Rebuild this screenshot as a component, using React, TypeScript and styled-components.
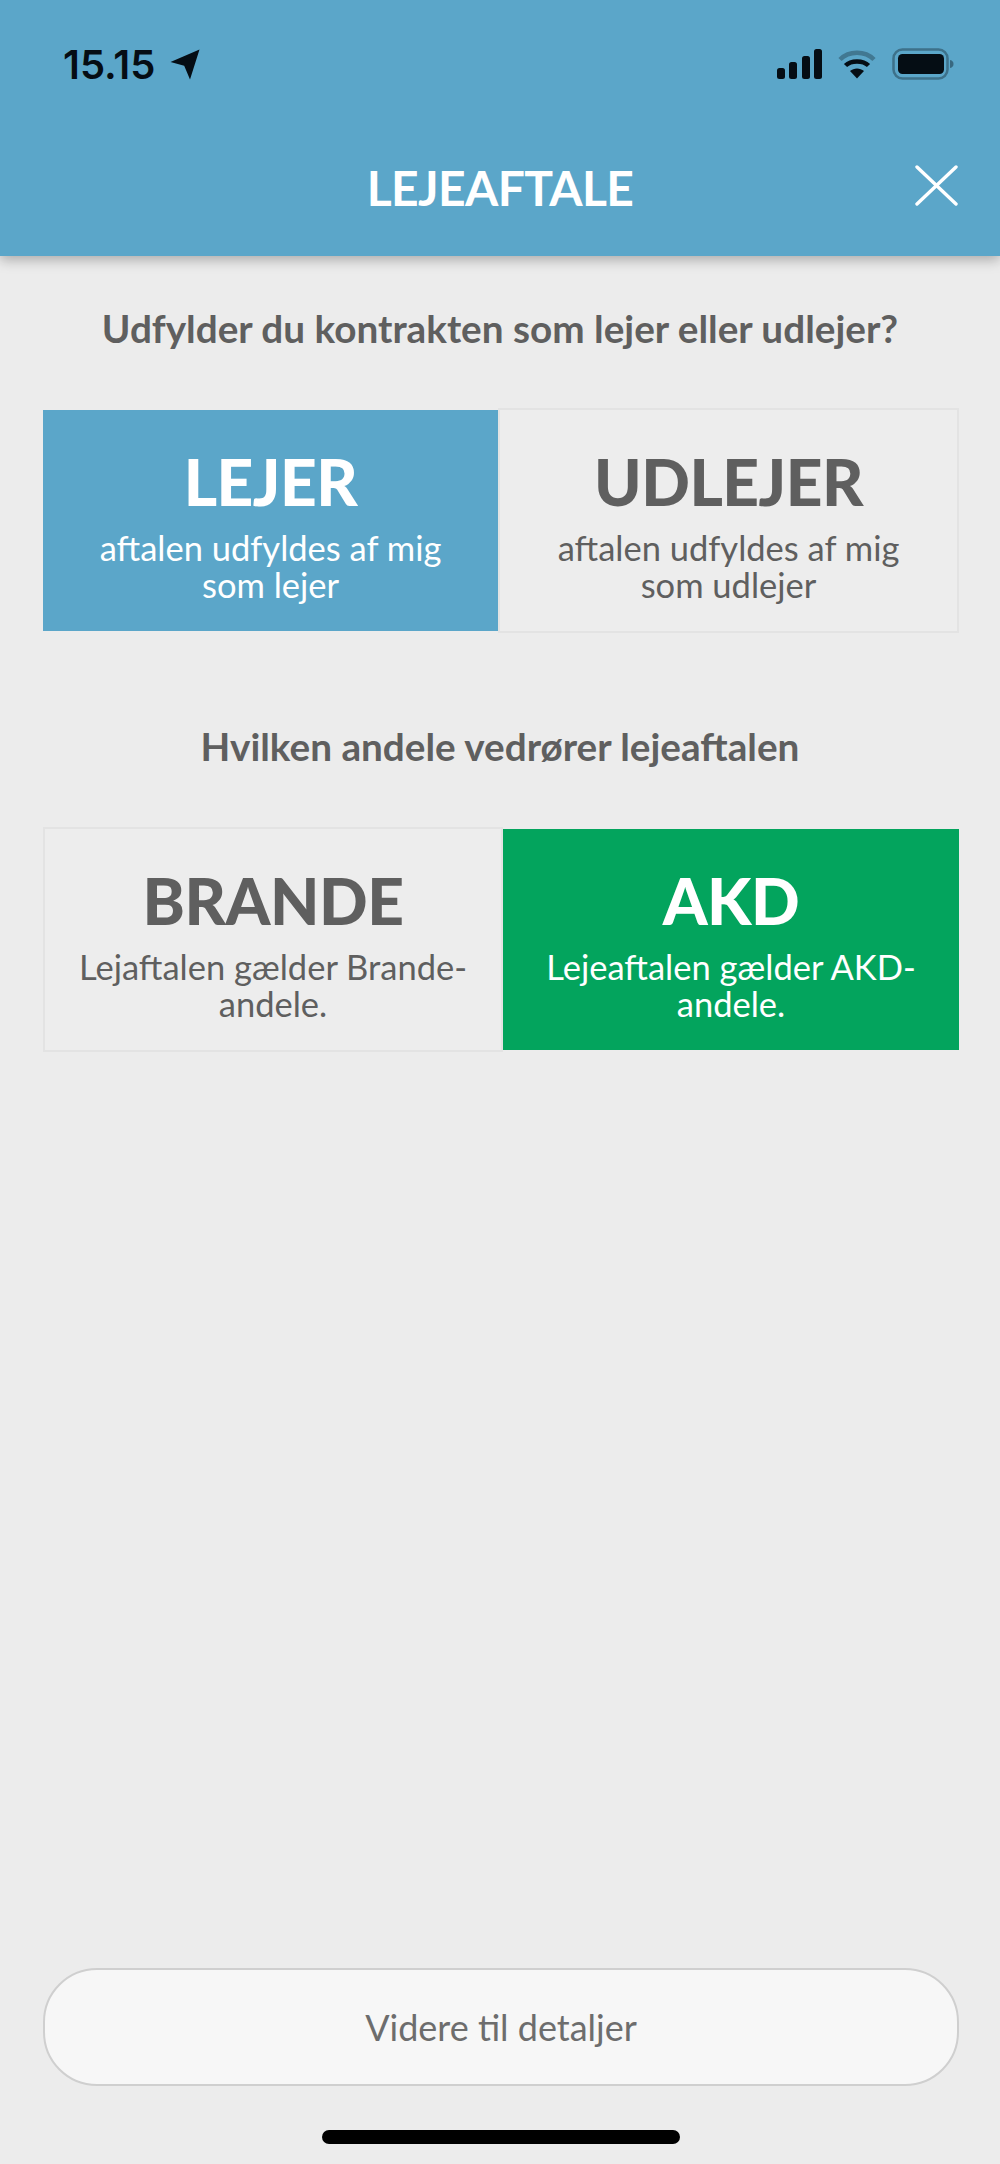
import React from 'react';
import styled, { createGlobalStyle } from 'styled-components';

const GlobalStyle = createGlobalStyle`
    html, body {
        margin: 0;
        padding: 0;
        background: #ececec;
    }
`

const Page = styled.div`
    width: 1000px;
    height: 2164px;
    display: flex;
    flex-direction: column;
    background: #ececec;
    font-family: "Lato", "Liberation Sans", sans-serif;
    color: #5f5f5f;
    overflow: hidden;
`

const Header = styled.header`
    height: 256px;
    flex: none;
    display: flex;
    flex-direction: column;
    background: #5ba6c9;
    box-shadow: 0 4px 12px rgba(0, 0, 0, 0.28);
`

const StatusBar = styled.div`
    height: 48px;
    margin-top: 40px;
    padding: 0 46px 0 63px;
    display: flex;
    align-items: center;
    justify-content: space-between;
    color: #050d14;
`

const StatusGroup = styled.div`
    display: flex;
    align-items: center;
`

const StatusIcons = styled(StatusGroup)`
    gap: 16px;
`

const Clock = styled.span`
    font-family: "Inter", "Liberation Sans", sans-serif;
    font-size: 40px;
    font-weight: 600;
    margin-right: 15px;
`

const TitleRow = styled.div`
    margin-top: 72px;
    padding: 0 42px 0 42px;
    display: grid;
    grid-template-columns: 1fr auto 1fr;
    align-items: center;
`

const Title = styled.h1`
    grid-column: 2;
    margin: 0;
    font-size: 48px;
    line-height: 56px;
    font-weight: 700;
    color: #fff;
    letter-spacing: -0.6px;
`

const CloseButton = styled.button`
    grid-column: 3;
    justify-self: end;
    margin-top: -6px;
    padding: 0;
    border: none;
    background: none;
    display: flex;
    color: #fff;
`

const Question = styled.h2<{ $top: number }>`
    margin: ${p => p.$top}px 0 0;
    font-size: 38.7px;
    line-height: 46px;
    font-weight: 700;
    text-align: center;
    color: #5f5f5f;
`

const OptionRow = styled.div<{ $split: number; $top: number }>`
    margin: ${p => p.$top}px 41px 0 43px;
    height: 225px;
    display: grid;
    grid-template-columns: ${p => p.$split}px 1fr;
`

const Option = styled.div<{ $active?: string }>`
    box-sizing: border-box;
    display: flex;
    flex-direction: column;
    align-items: center;
    padding-top: 36px;
    text-align: center;
    margin: ${p => (p.$active ? '2px 0' : '0')};
    background: ${p => p.$active || '#ededed'};
    border: ${p => (p.$active ? 'none' : '2px solid #e3e3e3')};
    color: ${p => (p.$active ? '#fff' : '#5f5f5f')};
`

const OptionName = styled.div`
    font-size: 64px;
    line-height: 72px;
    font-weight: 900;
    letter-spacing: -0.5px;
`

const OptionText = styled.div`
    margin-top: 11px;
    font-size: 34.5px;
    line-height: 37px;
`

const Footer = styled.div`
    margin-top: auto;
    padding: 0 41px 20px 43px;
    display: flex;
    flex-direction: column;
    align-items: center;
`

const NextButton = styled.button`
    box-sizing: border-box;
    width: 100%;
    height: 118px;
    border: 2px solid #cfcfcf;
    border-radius: 54px;
    background: #f7f7f7;
    font-family: inherit;
    font-size: 36px;
    color: #6d6d6d;
`

const HomeBar = styled.div`
    width: 358px;
    height: 14px;
    margin-top: 44px;
    border-radius: 7px;
    background: #000;
`

const LocationIcon = () => (
    <svg width="30" height="31" viewBox="0 0 30 31">
        <path d="M29.5 0.5 L20 30.5 L14.2 16.8 L0.5 13 Z" fill="currentColor" />
    </svg>
)

const SignalIcon = () => (
    <svg width="45" height="30" viewBox="0 0 45 30" fill="currentColor">
        <rect x="0" y="19" width="8" height="11" rx="2.5" />
        <rect x="12" y="13" width="8" height="17" rx="2.5" />
        <rect x="25" y="7" width="8" height="23" rx="2.5" />
        <rect x="37" y="0" width="8" height="30" rx="2.5" />
    </svg>
)

const WifiIcon = () => (
    <svg width="38" height="30" viewBox="0 0 38 30" fill="none" stroke="currentColor" strokeWidth="4.5">
        <path d="M2 10.5 C11 1.5 27 1.5 36 10.5" opacity="0.3" />
        <path d="M7.5 16.5 C13 11 25 11 30.5 16.5" />
        <path d="M19 29.5 L12 22 C16 18.6 22 18.6 26 22 Z" fill="currentColor" stroke="none" />
    </svg>
)

const BatteryIcon = () => (
    <svg width="62" height="32" viewBox="0 0 62 32" fill="none">
        <rect x="1.5" y="1.5" width="54" height="29" rx="9" stroke="currentColor" strokeWidth="2.5" opacity="0.35" />
        <rect x="6" y="6" width="46" height="20" rx="4.5" fill="currentColor" />
        <path d="M58 12 C60.5 12.6 61.5 14 61.5 16 C61.5 18 60.5 19.4 58 20 Z" fill="currentColor" opacity="0.4" />
    </svg>
)

const CloseIcon = () => (
    <svg width="43" height="41" viewBox="0 0 43 41" stroke="currentColor" strokeWidth="3.4" strokeLinecap="round">
        <line x1="2" y1="2" x2="41" y2="39" />
        <line x1="41" y1="2" x2="2" y2="39" />
    </svg>
)

const App: React.FC = () => (
    <Page>
        <GlobalStyle />
        <Header>
            <StatusBar>
                <StatusGroup>
                    <Clock>15.15</Clock>
                    <LocationIcon />
                </StatusGroup>
                <StatusIcons>
                    <SignalIcon />
                    <WifiIcon />
                    <BatteryIcon />
                </StatusIcons>
            </StatusBar>
            <TitleRow>
                <Title>LEJEAFTALE</Title>
                <CloseButton aria-label="Luk">
                    <CloseIcon />
                </CloseButton>
            </TitleRow>
        </Header>

        <Question $top={49}>Udfylder du kontrakten som lejer eller udlejer?</Question>
        <OptionRow $split={455} $top={57}>
            <Option $active="#5ba6c9">
                <OptionName>LEJER</OptionName>
                <OptionText>aftalen udfyldes af mig<br />som lejer</OptionText>
            </Option>
            <Option>
                <OptionName>UDLEJER</OptionName>
                <OptionText>aftalen udfyldes af mig<br />som udlejer</OptionText>
            </Option>
        </OptionRow>

        <Question $top={90}>Hvilken andele vedrører lejeaftalen</Question>
        <OptionRow $split={460} $top={58}>
            <Option>
                <OptionName>BRANDE</OptionName>
                <OptionText>Lejaftalen gælder Brande-<br />andele.</OptionText>
            </Option>
            <Option $active="#03a45d">
                <OptionName>AKD</OptionName>
                <OptionText>Lejeaftalen gælder AKD-<br />andele.</OptionText>
            </Option>
        </OptionRow>

        <Footer>
            <NextButton>Videre til detaljer</NextButton>
            <HomeBar />
        </Footer>
    </Page>
);

export default App;
